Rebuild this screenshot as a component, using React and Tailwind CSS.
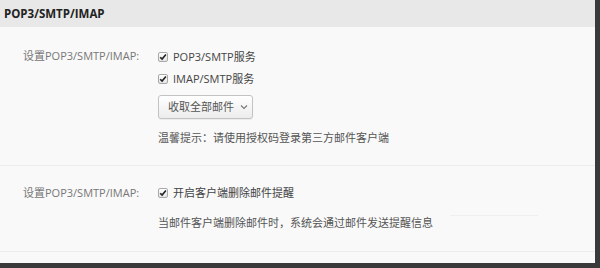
import React from "react";

const font = { fontFamily: '"Open Sans","Noto Sans CJK SC",sans-serif' };

function Check() {
  return (
    <span className="w-[10px] h-[10px] border border-[#a9a9a9] rounded-[2px] bg-gradient-to-b from-[#ffffff] to-[#e4e4e4] flex items-center justify-center shrink-0">
      <svg width="8" height="8" viewBox="0 0 8 8">
        <path d="M1.2 4.2 L3.1 6.1 L6.9 1.6" fill="none" stroke="#222" strokeWidth="1.6" />
      </svg>
    </span>
  );
}

function CheckRow({ children }) {
  return (
    <div className="h-[22px] flex items-center gap-[5px] text-[#444]">
      <Check />
      <span className="whitespace-nowrap">{children}</span>
    </div>
  );
}

export default function App() {
  return (
    <div className="w-[600px] h-[268px] bg-[#3a3a3a] text-[11px]" style={font}>
      <div className="w-[595px] h-[263px] bg-[#f9f9f9] flex flex-col">
        <div className="h-[27px] bg-[#e8e8e8] flex items-center px-[4px] font-bold text-[11.5px] text-[#222]">
          POP3/SMTP/IMAP
        </div>
        <div className="flex pt-[19px] pb-[17px] border-b border-[#ececec]">
          <div className="w-[158px] pl-[23px] text-[#777] h-[20px] leading-[20px] whitespace-nowrap">设置POP3/SMTP/IMAP:</div>
          <div className="flex flex-col">
            <CheckRow>POP3/SMTP服务</CheckRow>
            <CheckRow>IMAP/SMTP服务</CheckRow>
            <button className="mt-[5px] w-[95px] h-[24px] border border-[#c3c3c3] rounded-[3px] bg-gradient-to-b from-[#ffffff] to-[#ececec] flex items-center pl-[9px] gap-[6px] text-[#555] whitespace-nowrap shadow-[0_1px_1px_rgba(0,0,0,0.06)]">
              <span>收取全部邮件</span>
              <svg width="8" height="6" viewBox="0 0 8 6">
                <path d="M1 1.5 L4 4.5 L7 1.5" fill="none" stroke="#777" strokeWidth="1.1" />
              </svg>
            </button>
            <div className="mt-[9px] h-[20px] leading-[20px] text-[#555] whitespace-nowrap">温馨提示：请使用授权码登录第三方邮件客户端</div>
          </div>
        </div>
        <div className="flex pt-[16px] pb-[18px] border-b border-[#ececec] relative">
          <div className="w-[158px] pl-[23px] text-[#777] h-[22px] leading-[22px] whitespace-nowrap">设置POP3/SMTP/IMAP:</div>
          <div className="flex flex-col">
            <CheckRow>开启客户端删除邮件提醒</CheckRow>
            <div className="mt-[9px] h-[20px] leading-[20px] text-[#555] whitespace-nowrap">当邮件客户端删除邮件时，系统会通过邮件发送提醒信息</div>
          </div>
          <div className="absolute left-[450px] top-[49px] w-[88px] h-[1px] bg-[#efefef]" />
        </div>
      </div>
    </div>
  );
}
